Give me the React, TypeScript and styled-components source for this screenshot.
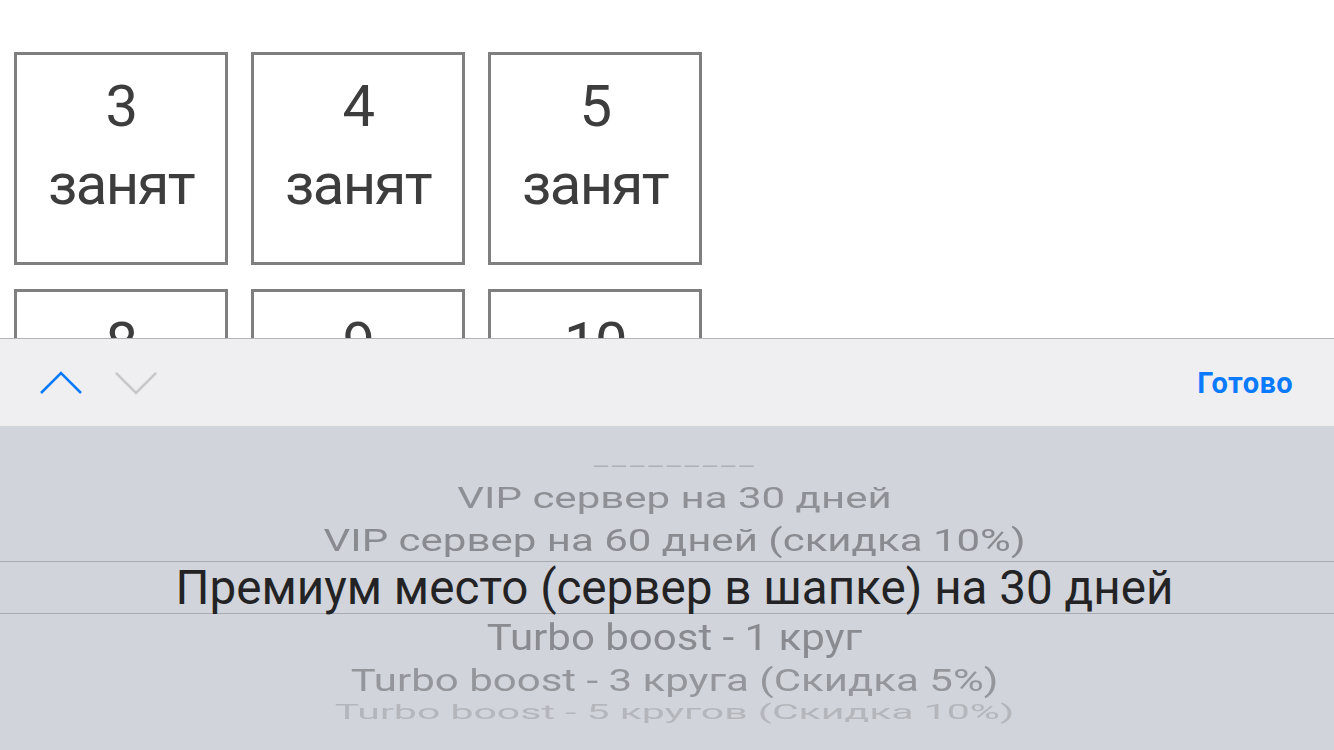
import React from "react";
import styled, { createGlobalStyle } from "styled-components";

const GlobalStyle = createGlobalStyle`
  html, body {
    margin: 0;
    padding: 0;
    background: #ffffff;
  }
  body {
    font-family: Roboto, "Liberation Sans", sans-serif;
    overflow: hidden;
  }
`;

const Screen = styled.div`
  width: 1334px;
  height: 750px;
  display: flex;
  flex-flow: column nowrap;
  overflow: hidden;
`;

const SeatArea = styled.div`
  height: 338px;
  overflow: hidden;
  padding: 52px 0 0 14px;
  box-sizing: border-box;
`;

const SeatGrid = styled.div`
  display: grid;
  grid-template-columns: repeat(3, 214px);
  column-gap: 23px;
  row-gap: 24px;
`;

const Seat = styled.div`
  height: 213px;
  border: 3px solid #7f7f7f;
  box-sizing: border-box;
  display: flex;
  flex-flow: column nowrap;
  align-items: center;
  padding-top: 12px;
  color: #3d3d3d;
  font-size: 58px;
  line-height: 78px;
  letter-spacing: -1.6px;
`;

const Toolbar = styled.div`
  height: 88px;
  box-sizing: border-box;
  border-top: 1px solid #b4b4b8;
  background: #efeff2;
  display: flex;
  align-items: center;
  padding: 0 41px 0 39px;
`;

const Arrows = styled.div`
  display: flex;
  align-items: center;
  gap: 31px;
  flex: 1;
`;

const Arrow = styled.svg<{ $active?: boolean }>`
  width: 44px;
  height: 24px;
  stroke: ${(p) => (p.$active ? "#0a7aff" : "#c7c7cc")};
  fill: none;
  stroke-width: 2.5;
`;

const Done = styled.button`
  border: none;
  background: none;
  padding: 0;
  color: #0a7aff;
  font-family: Roboto, "Liberation Sans", sans-serif;
  font-weight: 700;
  font-size: 29px;
  letter-spacing: 0.4px;
`;

const Picker = styled.div`
  flex: 1;
  background: #d1d4da;
  display: flex;
  flex-flow: column nowrap;
  padding-top: 26px;
`;

const Row = styled.div<{ $h: number }>`
  height: ${(p) => p.$h}px;
  display: flex;
  align-items: center;
  justify-content: center;
  padding-left: 15px;
`;

const Selected = styled.div`
  height: 53px;
  box-sizing: border-box;
  border-top: 1px solid #a9abb1;
  border-bottom: 1px solid #a9abb1;
  display: flex;
  align-items: center;
  justify-content: center;
  padding-left: 15px;
  color: #232325;
  font-size: 47.6px;
  white-space: nowrap;
`;

const Label = styled.span<{ $size: number; $sy: number; $color: string; $blur?: number; $track?: number }>`
  display: inline-block;
  white-space: nowrap;
  line-height: 1;
  font-size: ${(p) => p.$size}px;
  letter-spacing: ${(p) => p.$track ?? 0}px;
  color: ${(p) => p.$color};
  transform: scaleY(${(p) => p.$sy});
  filter: ${(p) => (p.$blur ? `blur(${p.$blur}px)` : "none")};
`;

const seats = [
  { n: 3, state: "занят" },
  { n: 4, state: "занят" },
  { n: 5, state: "занят" },
  { n: 8, state: "свободен" },
  { n: 9, state: "свободен" },
  { n: 10, state: "свободен" },
];

type Item = {
  text: string;
  h: number;
  size: number;
  sy: number;
  color: string;
  blur?: number;
  track?: number;
};

// rows above and below the selection, squashed as they roll away on the wheel
const above: Item[] = [
  { text: "---------", h: 25, size: 60, sy: 0.35, color: "#afb1b6", blur: 0.3, track: 1.6 },
  { text: "VIP сервер на 30 дней", h: 42, size: 42, sy: 0.72, color: "#8e9095" },
  { text: "VIP сервер на 60 дней (скидка 10%)", h: 42, size: 42, sy: 0.76, color: "#8a8b90" },
];

const below: Item[] = [
  { text: "Turbo boost - 1 круг", h: 46, size: 42, sy: 0.9, color: "#8a8b90" },
  { text: "Turbo boost - 3 круга (Скидка 5%)", h: 42, size: 42, sy: 0.73, color: "#94969b" },
  { text: "Turbo boost - 5 кругов (Скидка 10%)", h: 20, size: 41, sy: 0.5, color: "#b4b6bb", blur: 0.4 },
];

const PickerRow = ({ item }: { item: Item }) => (
  <Row $h={item.h}>
    <Label
      $size={item.size}
      $sy={item.sy}
      $color={item.color}
      $blur={item.blur}
      $track={item.track}
    >
      {item.text}
    </Label>
  </Row>
);

const App = () => {
  return (
    <Screen>
      <GlobalStyle />
      <SeatArea>
        <SeatGrid>
          {seats.map((s) => (
            <Seat key={s.n}>
              <span>{s.n}</span>
              <span>{s.state}</span>
            </Seat>
          ))}
        </SeatGrid>
      </SeatArea>
      <Toolbar>
        <Arrows>
          <Arrow $active viewBox="0 0 44 24">
            <polyline points="2,22 22,2 42,22" />
          </Arrow>
          <Arrow viewBox="0 0 44 24">
            <polyline points="2,2 22,22 42,2" />
          </Arrow>
        </Arrows>
        <Done type="button">Готово</Done>
      </Toolbar>
      <Picker>
        {above.map((it) => (
          <PickerRow key={it.text} item={it} />
        ))}
        <Selected>Премиум место (сервер в шапке) на 30 дней</Selected>
        {below.map((it) => (
          <PickerRow key={it.text} item={it} />
        ))}
      </Picker>
    </Screen>
  );
};

export default App;
